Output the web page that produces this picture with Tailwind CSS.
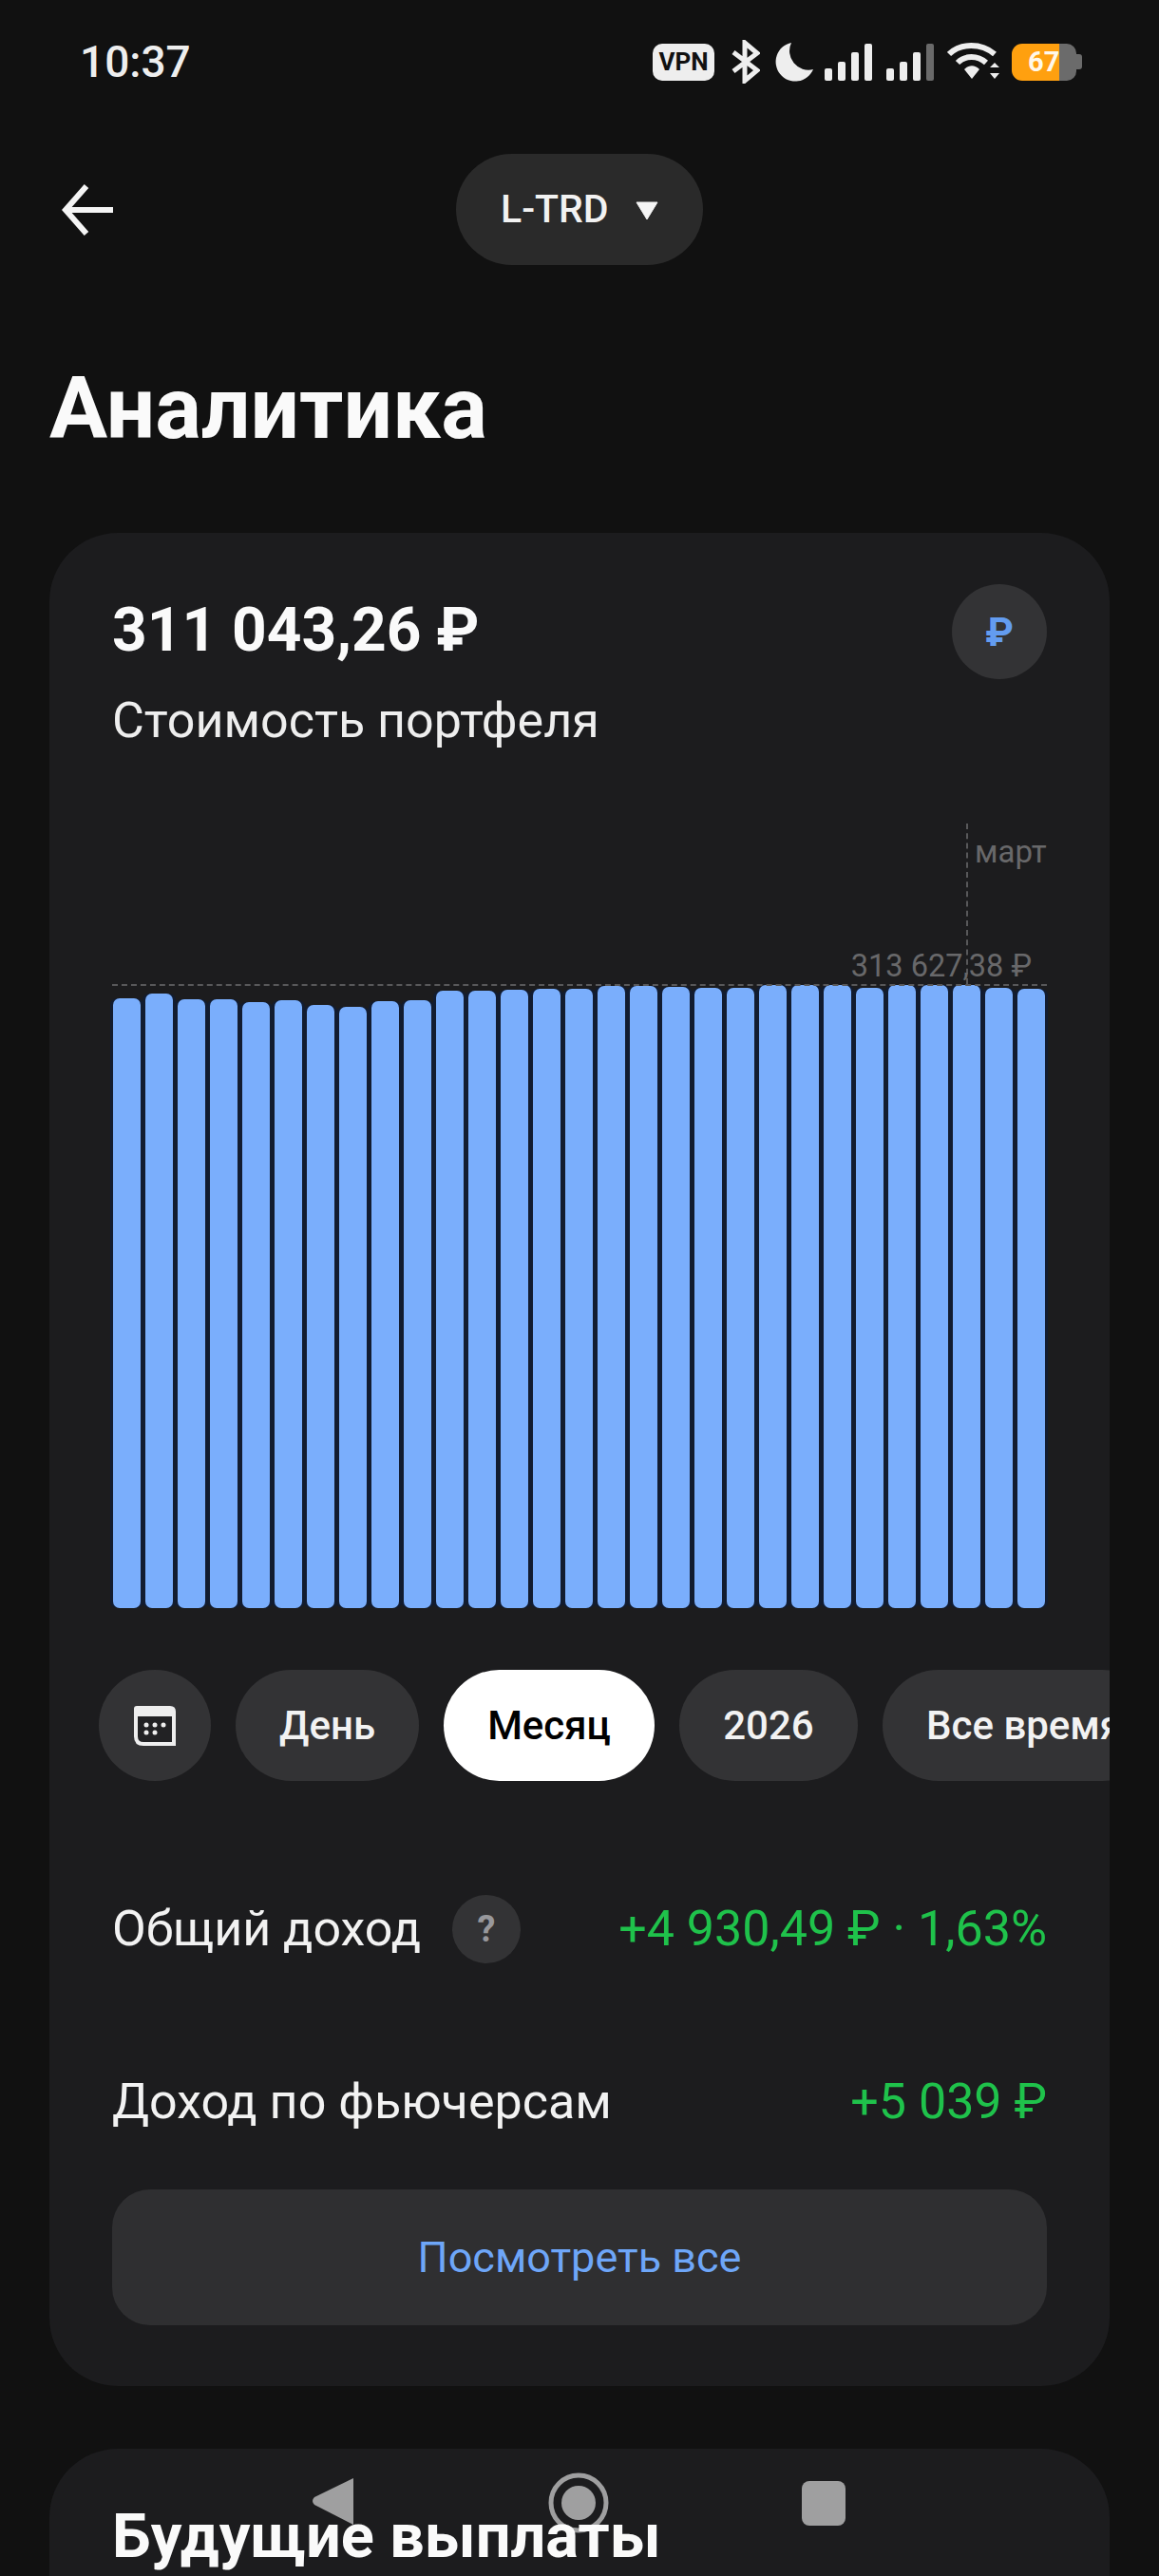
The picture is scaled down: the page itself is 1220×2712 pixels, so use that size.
<!DOCTYPE html>
<html lang="ru">
<head>
  <meta charset="UTF-8">
  <meta name="viewport" content="width=device-width, initial-scale=1.0">
  <title>Аналитика</title>
  <script src="https://cdn.jsdelivr.net/npm/@tailwindcss/browser@4"></script>
</head>
<body>
  <div class="relative w-[1220px] h-[2712px] overflow-hidden bg-[#111111] text-white font-['Roboto',sans-serif]">

    <!-- status bar -->
    <div class="h-[130px] flex items-center justify-between pl-[84px] pr-[80px]">
      <span class="text-[46px] font-medium leading-none text-[#eeeeee]">10:37</span>
      <div class="flex items-center">
        <div class="w-[65px] h-[39px] rounded-[10px] bg-[#eeeeee] text-[#111111] text-[26px] font-bold leading-[39px] text-center">VPN</div>
        <svg class="ml-[18px]" width="30" height="46" viewBox="0 0 30 46" fill="none" stroke="#eeeeee" stroke-width="5"><path d="M2 13 L27 32 L14 43 V3 L27 14 L2 33"/></svg>
        <svg class="ml-[16px]" width="40" height="41" viewBox="0 0 40 41" fill="#eeeeee"><path d="M17 0 A20.5 20.5 0 1 0 40 28 A20 20 0 0 1 17 0Z"/></svg>
        <svg class="ml-[12px]" width="50" height="39" viewBox="0 0 50 39" fill="#eeeeee">
          <rect x="0" y="26" width="8" height="13" rx="2"/><rect x="14" y="19" width="8" height="20" rx="2"/><rect x="28" y="9" width="8" height="30" rx="2"/><rect x="42" y="0" width="8" height="39" rx="2"/>
        </svg>
        <svg class="ml-[15px]" width="50" height="39" viewBox="0 0 50 39" fill="#eeeeee">
          <rect x="0" y="26" width="8" height="13" rx="2"/><rect x="14" y="19" width="8" height="20" rx="2"/><rect x="28" y="9" width="8" height="30" rx="2"/><rect x="42" y="0" width="8" height="39" rx="2" fill="#6a6a6a"/>
        </svg>
        <svg class="ml-[14px]" width="56" height="40" viewBox="0 0 56 40" fill="none" stroke="#eeeeee" stroke-width="6">
          <path d="M2 12 C14 0 36 0 50 12"/><path d="M11 21 C19 13 32 13 41 21"/>
          <path d="M18 28 L26 38 L34 28 C29 23 23 23 18 28Z" fill="#eeeeee" stroke="none"/>
          <path d="M45 26 L50 21 L55 26Z M45 32 L55 32 L50 38Z" fill="#eeeeee" stroke="none"/>
        </svg>
        <div class="ml-[12px] relative flex w-[75px] h-[39px] items-center">
          <div class="w-[50px] h-full bg-[#ffa00f] rounded-l-[11px]"></div>
          <div class="w-[18px] h-full bg-[#6b6b6b] rounded-r-[10px]"></div>
          <div class="w-[6px] h-[16px] bg-[#6b6b6b] rounded-r-[3px]"></div>
          <span class="absolute left-[17px] top-[3px] text-[29px] leading-[33px] font-bold text-[#fff8ea]">67</span>
        </div>
      </div>
    </div>

    <!-- top nav -->
    <div class="relative mt-[32px] h-[117px] flex justify-center">
      <svg class="absolute left-[65px] top-[32px]" width="54" height="54" viewBox="0 0 54 54" fill="none" stroke="#f5f5f5" stroke-width="6"><path d="M26 2 L4 27 L26 52 M4 27 H54"/></svg>
      <div class="w-[260px] h-[117px] rounded-full bg-[#2a2a2a] flex items-center pl-[47px]">
        <span class="text-[41px] font-medium leading-none text-[#f2f2f2]">L-TRD</span>
        <svg class="ml-[28px] mt-[2px]" width="24" height="20" viewBox="0 0 24 20" fill="#f5f5f5"><path d="M1 1 H23 L12 19Z" stroke="#f5f5f5" stroke-linejoin="round"/></svg>
      </div>
    </div>

    <h1 class="mt-[101px] ml-[52px] h-[100px] text-[91px] font-bold leading-[100px] text-[#fafafa]">Аналитика</h1>

    <!-- portfolio card -->
    <section class="mt-[81px] mx-[52px] h-[1951px] rounded-[72px] bg-[#1c1c1e] overflow-hidden px-[66px] pt-[54px]">
      <div class="flex justify-between">
        <div class="pt-[13px]">
          <div class="text-[64px] font-bold leading-[72px] text-[#fafafa]">311 043,26 ₽</div>
          <div class="mt-[29px] text-[52px] leading-[60px] text-[#eeeeee]">Стоимость портфеля</div>
        </div>
        <div class="w-[100px] h-[100px] rounded-full bg-[#333335] flex items-center justify-center text-[42px] font-bold text-[#639cf0]">₽</div>
      </div>

      <!-- chart -->
      <div class="relative mt-[78px] h-[826px]">
        <div id="bars" class="absolute left-[1px] bottom-0 flex items-end gap-[5px]"></div>
        <div class="absolute left-0 right-0 top-[169px] border-t-2 border-dashed border-[#58585a]"></div>
        <div class="absolute left-[899px] top-0 h-[169px] border-l-2 border-dashed border-[#58585a]"></div>
        <span class="absolute left-[908px] top-[10px] text-[33px] leading-[40px] text-[#68686a]">март</span>
        <span class="absolute right-[16px] top-[131px] text-[32.5px] leading-[38px] text-[#68686a]">313 627,38 ₽</span>
      </div>

      <!-- period pills -->
      <div class="mt-[65px] -ml-[14px] flex gap-[26px] whitespace-nowrap text-[42px] font-medium leading-none text-[#f2f2f2]">
        <div class="w-[118px] h-[117px] shrink-0 rounded-full bg-[#333335] flex items-center justify-center">
          <svg width="44" height="42" viewBox="0 0 44 42">
            <path d="M3 0 H38 Q44 0 44 6 V42 H10 Q0 42 0 32 V3 Q0 0 3 0Z" fill="#eeeeee"/>
            <path d="M4 11 H40 V38 H10 Q4 38 4 32Z" fill="#222224"/>
            <g fill="#eeeeee"><circle cx="13" cy="20" r="2.5"/><circle cx="22" cy="20" r="2.5"/><circle cx="31" cy="20" r="2.5"/><circle cx="13" cy="28" r="2.5"/><circle cx="22" cy="28" r="2.5"/></g>
          </svg>
        </div>
        <div class="w-[193px] h-[117px] shrink-0 rounded-full bg-[#333335] flex items-center justify-center">День</div>
        <div class="w-[222px] h-[117px] shrink-0 rounded-full bg-white text-black flex items-center justify-center">Месяц</div>
        <div class="w-[188px] h-[117px] shrink-0 rounded-full bg-[#333335] flex items-center justify-center">2026</div>
        <div class="w-[290px] h-[117px] shrink-0 rounded-full bg-[#333335] flex items-center pl-[46px]">Все время</div>
      </div>

      <!-- totals -->
      <div class="mt-[120px] h-[72px] flex items-center justify-between text-[52px]">
        <div class="flex items-center text-[#f2f2f2]">
          <span>Общий доход</span>
          <span class="ml-[33px] w-[72px] h-[72px] rounded-full bg-[#333335] flex items-center justify-center text-[38px] font-bold text-[#98989c]">?</span>
        </div>
        <span class="text-[#1fc24b]">+4 930,49 ₽ · 1,63%</span>
      </div>
      <div class="mt-[116px] h-[60px] flex items-center justify-between text-[52px]">
        <span class="text-[#f2f2f2]">Доход по фьючерсам</span>
        <span class="text-[#1fc24b]">+5 039 ₽</span>
      </div>
      <button class="mt-[62px] w-full h-[143px] rounded-[40px] bg-[#2f2f31] text-[45px] text-[#6ea6f8]">Посмотреть все</button>
    </section>

    <!-- next card -->
    <section class="mt-[66px] mx-[52px] h-[300px] rounded-t-[72px] bg-[#1c1c1e] px-[66px] pt-[56px]">
      <h2 class="text-[65px] font-bold leading-[72px] text-[#fafafa]">Будущие выплаты</h2>
    </section>

    <!-- android nav buttons, float over the content -->
    <svg class="absolute left-[325px] top-[2600px]" width="570" height="70" viewBox="0 0 570 70" fill="#ffffff" fill-opacity="0.58">
      <path d="M47 9 V58 L6 37 Q2 33 6 29Z" />
      <circle cx="284" cy="35" r="29" fill="none" stroke="#ffffff" stroke-opacity="0.58" stroke-width="5"/>
      <circle cx="284" cy="35" r="18"/>
      <rect x="519" y="12" width="46" height="47" rx="8"/>
    </svg>
  </div>

  <script>
    // bar tops as read from the chart, bottom sits at 826px of the chart box
    const tops = [1051,1046,1052,1052,1055,1053,1058,1060,1054,1053,1043,1043,1042,1041,1041,1038,1038,1039,1040,1040,1037,1037,1037,1040,1037,1037,1037,1040,1041];
    const bars = document.getElementById('bars');
    tops.forEach(function(top) {
      const bar = document.createElement('div');
      bar.className = 'w-[29px] rounded-[7px] bg-[#7aaefc] shadow-[3px_0_0_#121c30,-3px_0_0_#121c30]';
      bar.style.height = (1693 - top) + 'px';
      bars.appendChild(bar);
    });
  </script>
</body>
</html>
